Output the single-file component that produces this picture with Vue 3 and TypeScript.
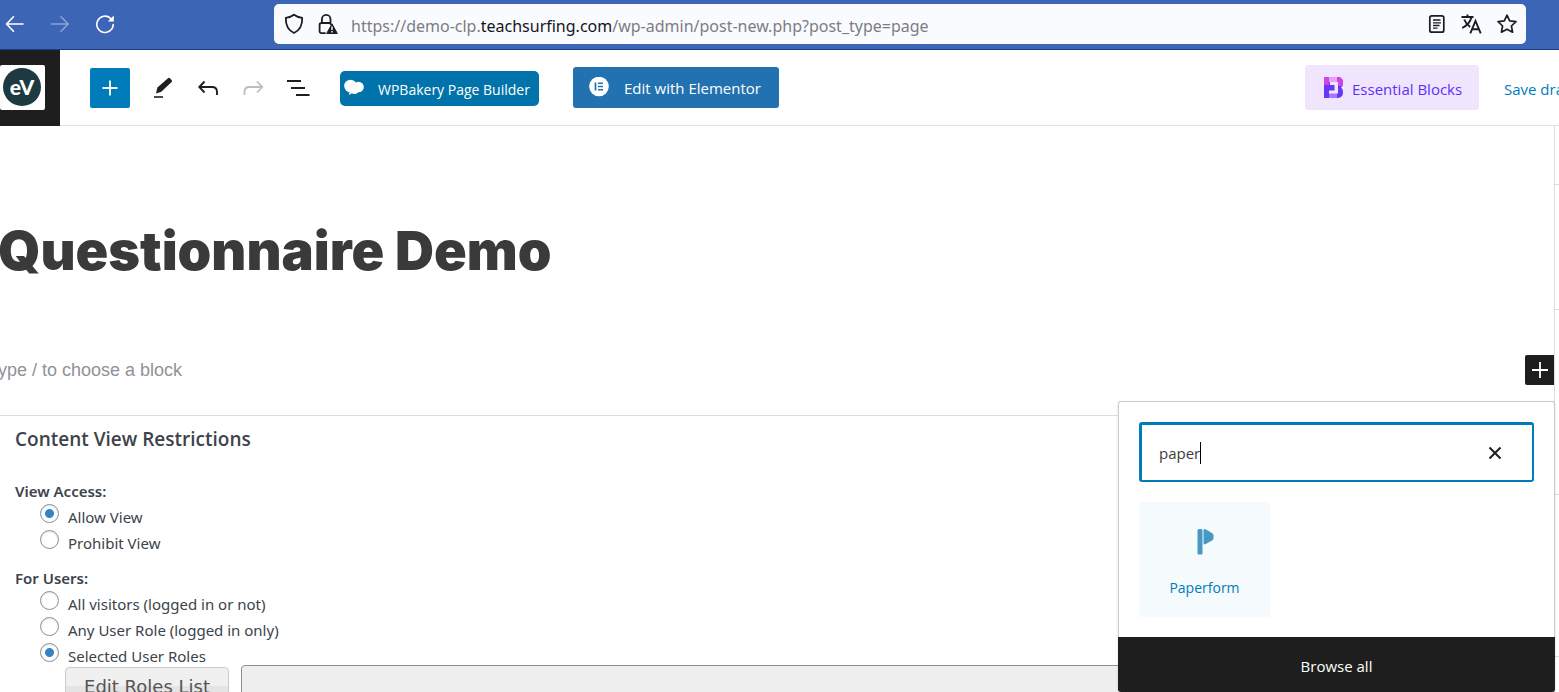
<script setup lang="ts">
import { ref } from 'vue'

interface Choice {
  value: string
  label: string
}

const accessChoices: Choice[] = [
  { value: 'allow', label: 'Allow View' },
  { value: 'prohibit', label: 'Prohibit View' },
]
const userChoices: Choice[] = [
  { value: 'all', label: 'All visitors (logged in or not)' },
  { value: 'any', label: 'Any User Role (logged in only)' },
  { value: 'selected', label: 'Selected User Roles' },
]

const access = ref('allow')
const users = ref('selected')
const search = ref('paper')
const roles = ref('')
</script>

<template>
  <div class="page">
    <nav class="browser" aria-label="Browser">
      <div class="nav-buttons">
        <button type="button" aria-label="Back">
          <svg width="20" height="20" viewBox="0 0 20 20" fill="none" stroke="#fff" stroke-width="1.6" stroke-linecap="round" stroke-linejoin="round"><path d="M18 10H2M8.500 2.800L1.500 10l7 7.200" /></svg>
        </button>
        <button type="button" aria-label="Forward" class="faded">
          <svg width="20" height="20" viewBox="0 0 20 20" fill="none" stroke="#fff" stroke-width="1.6" stroke-linecap="round" stroke-linejoin="round"><path d="M1.5 10H18M11 2.8l7.2 7.2L11 17.2" /></svg>
        </button>
        <button type="button" aria-label="Reload">
          <svg width="20" height="20" viewBox="0 0 20 20" fill="none" stroke="#fff" stroke-width="1.6" stroke-linecap="round"><path d="M18.2 10.5A8.2 8.2 0 1 1 15.6 4.3" /><path d="M18.8 1.6v6h-6z" fill="#fff" stroke="none" /></svg>
        </button>
      </div>
      <div class="address">
        <svg class="shield" width="20" height="22" viewBox="0 0 20 22" fill="none" stroke="#1c1c24" stroke-width="1.8" stroke-linejoin="round"><path d="M10 1.8C12 3.4 15 4.4 18.2 4.9 18.4 11.5 16.5 17 10 20 3.5 17 1.6 11.5 1.8 4.9 5 4.4 8 3.4 10 1.8z" /></svg>
        <svg class="lock" width="20" height="22" viewBox="0 0 20 22" fill="none" stroke="#1c1c24" stroke-width="1.8"><path d="M7 20.1H3.4a1.8 1.8 0 0 1-1.8-1.8v-6.5A1.8 1.8 0 0 1 3.4 10h8.5M3.9 10V6.2a4.3 4.3 0 0 1 8.6 0V11" stroke-linecap="round" /><path d="M14 10.8l5.3 9.7H8.7z" fill="#1c1c24" stroke="#1c1c24" stroke-width="1" stroke-linejoin="round" /><path d="M14 13.5v3.4M14 18v1.5" stroke="#fff" stroke-width="1.4" /></svg>
        <span class="url">https://demo-clp.<b>teachsurfing.com</b>/wp-admin/post-new.php?post_type=page</span>
        <span class="address-tools">
          <button type="button" aria-label="Reader view">
            <svg width="20" height="20" viewBox="0 0 20 20" fill="none" stroke="#1c1c24" stroke-width="1.7"><rect x="3.8" y="1.8" width="14" height="16.4" rx="2" /><path d="M7 6h7.500M7 8.800h8M7 11.500h6.500M7 14.200h4.500" stroke-width="1.300" /></svg>
          </button>
          <button type="button" aria-label="Translate">
            <svg width="22" height="20" viewBox="0 0 22 20" fill="none" stroke="#1c1c24" stroke-width="1.900"><path d="M1.500 3h12M7.500.5V3M11.500 3C10.500 7.500 7 11.500 2.200 14M4.200 5.500c1.300 3.200 3.300 5.600 6 7.500" /><path d="M10.300 19.300L15.500 7l5.200 12.300M12.200 15.300h6.600" /></svg>
          </button>
          <button type="button" aria-label="Bookmark">
            <svg width="22" height="20" viewBox="0 0 22 20" fill="none" stroke="#1c1c24" stroke-width="1.700" stroke-linejoin="round"><path d="M11 1.200l2.700 5.700 6.300.8-4.600 4.300 1.200 6.200L11 15.200l-5.600 3 1.200-6.200L2 7.700l6.300-.8z" /></svg>
          </button>
        </span>
      </div>
    </nav>

    <header class="topbar">
      <a href="#" class="site" aria-label="View pages">
        <span class="site-tile"><span class="site-logo">eV</span></span>
      </a>
      <div class="tools">
        <button type="button" class="inserter" aria-label="Toggle block inserter">
          <svg width="20" height="20" viewBox="0 0 20 20" stroke="#fff" stroke-width="1.8"><path d="M10 2.500v15M2.500 10h15" /></svg>
        </button>
        <button type="button" class="tool" aria-label="Tools">
          <svg width="24" height="24" viewBox="0 0 24 24"><path d="M5 17.500l1.400-6L17 2.300a1.400 1.400 0 0 1 1.900 0l1.700 1.800a1.400 1.400 0 0 1 0 1.900L10.300 15.800z" fill="#1e1e1e" /><path d="M3 21h9" stroke="#1e1e1e" stroke-width="1.600" /></svg>
        </button>
        <button type="button" class="tool" aria-label="Undo">
          <svg width="24" height="24" viewBox="0 0 24 24" fill="none" stroke="#1e1e1e" stroke-width="1.900"><path d="M8.500 5.500L3.300 11l5.200 5.500M3.300 11H16q5 0 5 5v3" /></svg>
        </button>
        <button type="button" class="tool" aria-label="Redo">
          <svg width="24" height="24" viewBox="0 0 24 24" fill="none" stroke="#bdbdbd" stroke-width="1.800"><path d="M16 5.500l5.200 5.500L16 16.500M21.200 11H8.500q-5 0-5 5v3" /></svg>
        </button>
        <button type="button" class="tool" aria-label="Document overview">
          <svg width="24" height="24" viewBox="0 0 24 24" stroke="#1e1e1e" stroke-width="1.800"><path d="M1 5h14M5 12h14M10 19h13.500" /></svg>
        </button>
      </div>
      <button type="button" class="wpbakery">
        <svg width="20" height="18" viewBox="0 0 20 18" fill="#fff"><circle cx="6.500" cy="7" r="6.300" /><circle cx="14.500" cy="8" r="5.300" /><circle cx="10.500" cy="11" r="4" /><path d="M9 13.500L4.800 16l1-4z" /></svg>
        <span>WPBakery Page Builder</span>
      </button>
      <button type="button" class="elementor">
        <svg width="22" height="22" viewBox="0 0 22 22"><circle cx="11" cy="9.500" r="9.800" fill="#fff" /><path d="M7.500 5.500v8" stroke="#2271b1" stroke-width="1.700" /><path d="M10 6.200h5M10 9.500h5M10 12.800h5" stroke="#2271b1" stroke-width="1.500" /></svg>
        <span>Edit with Elementor</span>
      </button>
      <button type="button" class="essential">
        <svg width="20" height="22" viewBox="0 0 20 22"><path d="M0 0h14a5 5 0 0 1 5 5v1.500q0 2.500-2 4 2 1.500 2 4V16a5 5 0 0 1-5 5H0z" fill="#6b35f5" /><path d="M0 0h14a5 5 0 0 1 5 5v1.500q0 1.500-.8 2.500L13 9V5H5v3H0z" fill="#cf45de" /><path d="M5 0h8v5H5z" fill="#ee9df7" /><path d="M5 16h8v5H5z" fill="#9f7bff" /><path d="M6 5h8v11.500H5v-3h5.500V8H6z" fill="#efe5fd" /></svg>
        <span>Essential Blocks</span>
      </button>
      <a href="#" class="save">Save draft</a>
    </header>

    <div class="workspace">
      <main class="editor">
        <h1 class="title">Questionnaire Demo</h1>
        <div class="block-row">
          <p class="prompt">Type / to choose a block</p>
          <button type="button" class="add-block" aria-label="Add block">
            <svg width="20" height="20" viewBox="0 0 20 20" stroke="#fff" stroke-width="1.800"><path d="M10 2v16M2 10h16" /></svg>
          </button>
          <section class="popover" aria-label="Block inserter">
            <div class="popover-body">
              <div class="search">
                <input v-model="search" type="text" aria-label="Search for blocks" />
                <span class="caret-line"><span class="typed">{{ search }}</span></span>
                <button type="button" aria-label="Reset search" @click="search = ''">
                  <svg width="14" height="14" viewBox="0 0 14 14" stroke="#1e1e1e" stroke-width="2"><path d="M1.500 1.500l11 11M12.500 1.500l-11 11" /></svg>
                </button>
              </div>
              <button type="button" class="block-card">
                <svg width="30" height="30" viewBox="0 0 30 30" fill="#4799c2"><rect x="7.500" y="3" width="5" height="25.500" rx="1.500" /><path d="M13.500 4.500q0-2 2-1.200l6.500 3.800q1.500 1 1.500 2.500v2.500q0 1.500-1.500 2.500l-6.200 3.500q-2.300 1-2.300-1z" /></svg>
                <span>Paperform</span>
              </button>
            </div>
            <button type="button" class="browse">Browse all</button>
          </section>
        </div>

        <section class="restrictions">
          <h2>Content View Restrictions</h2>
          <fieldset>
            <legend>View Access:</legend>
            <label v-for="c in accessChoices" :key="c.value">
              <input v-model="access" type="radio" name="access" :value="c.value" />
              <span>{{ c.label }}</span>
            </label>
          </fieldset>
          <fieldset>
            <legend>For Users:</legend>
            <label v-for="c in userChoices" :key="c.value">
              <input v-model="users" type="radio" name="users" :value="c.value" />
              <span>{{ c.label }}</span>
            </label>
          </fieldset>
          <div class="roles">
            <button type="button">Edit Roles List</button>
            <input v-model="roles" type="text" readonly aria-label="Selected roles" />
          </div>
        </section>
      </main>
      <aside class="sidebar" aria-label="Settings">
        <div class="panel head"></div>
        <div class="panel summary"></div>
        <div class="panel status"></div>
        <div class="panel template"></div>
      </aside>
    </div>
  </div>
</template>

<style>
body {
  margin: 0;
  overflow: hidden;
}
</style>

<style scoped>
* {
  box-sizing: border-box;
}

.page {
  display: flex;
  flex-direction: column;
  height: 100vh;
  overflow: hidden;
  background: #fff;
  color: #3c434a;
  font-family: 'Open Sans', 'Noto Sans', sans-serif;
  font-size: 15px;
}

button {
  margin: 0;
  padding: 0;
  border: 0;
  background: none;
  color: inherit;
  font: inherit;
  cursor: pointer;
}

svg {
  display: block;
  flex: none;
}

/* Browser chrome */
.browser {
  display: flex;
  flex: none;
  align-items: center;
  height: 50px;
  padding: 0 33px 2px 5px;
  border-bottom: 1px solid #1c3a7c;
  background: #3d65b6;
}

.nav-buttons {
  display: flex;
  flex: none;
  gap: 25px;
  width: 269px;
}

.faded {
  opacity: 0.4;
}

.address {
  display: flex;
  flex: 1;
  align-items: center;
  height: 40px;
  padding: 0 8px 0 10px;
  border-radius: 5px;
  background: #f9fbff;
}

.lock {
  margin-left: 14px;
}

.url {
  flex: 1;
  margin-left: 13px;
  padding-top: 4px;
  color: #7c7d83;
  font-family: 'Noto Sans', sans-serif;
  font-size: 16px;
  line-height: 22px;
  white-space: nowrap;
}

.url b {
  color: #15141a;
  font-weight: 400;
}

.address-tools {
  display: flex;
  align-items: center;
  gap: 14px;
}

/* Editor toolbar */
.topbar {
  display: flex;
  flex: none;
  align-items: center;
  height: 76px;
  border-bottom: 1px solid #e0e0e0;
}

.site {
  display: flex;
  flex: none;
  align-items: center;
  align-self: flex-start;
  width: 60px;
  height: 76px;
  padding-bottom: 2px;
  background: #1e1e1e;
  text-decoration: none;
}

.site-tile {
  display: flex;
  align-items: center;
  justify-content: center;
  width: 45px;
  height: 45px;
  padding-right: 1px;
  border-radius: 2px;
  background: #fff;
}

.site-logo {
  width: 38px;
  height: 38px;
  border-radius: 50%;
  background: #1d3a40;
  color: #fff;
  font-family: Lato, sans-serif;
  font-size: 21px;
  font-weight: 900;
  line-height: 37px;
  text-align: center;
}

.tools {
  display: flex;
  flex: none;
  align-items: center;
  gap: 21px;
  margin-left: 30px;
}

.inserter {
  display: flex;
  align-items: center;
  justify-content: center;
  width: 40px;
  height: 40px;
  border-radius: 2px;
  background: #007cba;
}

.wpbakery,
.elementor,
.essential {
  display: flex;
  flex: none;
  align-items: center;
  white-space: nowrap;
}

.wpbakery {
  width: 199px;
  height: 35px;
  margin-top: 1px;
  margin-left: 30px;
  padding-left: 4px;
  gap: 14px;
  border-radius: 5px;
  background: #0073aa;
  color: #fff;
  font-size: 14px;
}

.wpbakery span {
  padding-top: 3px;
}

.elementor {
  width: 206px;
  height: 41px;
  margin-left: 34px;
  padding-left: 15px;
  gap: 14px;
  border-radius: 3px;
  background: #2271b1;
  color: #fff;
}

.essential {
  width: 174px;
  height: 45px;
  margin-left: auto;
  padding-left: 19px;
  gap: 8px;
  border-radius: 3px;
  background: #efe5fd;
  color: #5e2eff;
}

.essential span,
.save {
  padding-top: 2px;
}

.save {
  flex: none;
  width: 55px;
  margin-left: 25px;
  color: #007cba;
  text-decoration: none;
  white-space: nowrap;
}

/* Canvas */
.workspace {
  display: flex;
  flex: 1;
  min-height: 0;
}

.editor {
  flex: 1;
  min-width: 0;
}

.title {
  margin: 0 0 0 -2px;
  padding: 90px 0 69px;
  color: #3a3a3a;
  font-family: Inter, 'Liberation Sans', sans-serif;
  font-size: 54px;
  font-weight: 900;
  line-height: 70px;
  white-space: nowrap;
}

.block-row {
  position: relative;
  display: flex;
  align-items: center;
  justify-content: space-between;
  height: 30px;
}

.prompt {
  margin: 0 0 0 -12px;
  color: #8f9297;
  font-family: 'Liberation Sans', Arial, sans-serif;
  font-size: 18px;
}

.add-block {
  display: flex;
  align-items: center;
  justify-content: center;
  width: 29px;
  height: 30px;
  border-radius: 2px 0 0 2px;
  background: #1e1e1e;
}

/* Inserter popover */
.popover {
  position: absolute;
  z-index: 2;
  top: 46px;
  right: -1px;
  width: 437px;
  border: 1px solid #ccc;
  border-bottom: 0;
  border-radius: 3px;
  background: #fff;
  box-shadow: 0 1px 3px rgba(0, 0, 0, 0.12);
}

.popover-body {
  padding: 20px;
}

.search {
  position: relative;
  display: flex;
  align-items: center;
  height: 60px;
  border: 2px solid #007cba;
  border-top-width: 3px;
  border-left-width: 3px;
  border-radius: 3px;
}

.search input {
  flex: 1;
  min-width: 0;
  height: 100%;
  padding: 1px 0 0 17px;
  border: 0;
  outline: 0;
  background: none;
  color: #3c3c3c;
  font: inherit;
}

.search button {
  margin-right: 30px;
}

.caret-line {
  position: absolute;
  left: 17px;
  height: 22px;
  border-right: 1px solid #000;
  pointer-events: none;
}

.typed {
  visibility: hidden;
}

.block-card {
  display: flex;
  flex-direction: column;
  align-items: center;
  width: 131px;
  height: 115px;
  margin-top: 20px;
  padding-top: 24px;
  gap: 22px;
  border-radius: 2px;
  background: #f5fafd;
  color: #007cba;
  font-size: 14px;
}

.browse {
  display: block;
  width: calc(100% + 2px);
  height: 55px;
  margin: 0 -1px;
  padding-top: 2px;
  border-radius: 0 0 3px 3px;
  background: #1e1e1e;
  color: #fff;
}

/* Restrictions box */
.restrictions {
  margin-top: 30px;
  padding: 10px 0 0 15px;
  border-top: 1px solid #ddd;
  font-family: 'Noto Sans', sans-serif;
}

.restrictions h2 {
  margin: 0 0 27px;
  font-family: 'Open Sans', sans-serif;
  font-size: 19px;
  font-weight: 600;
  line-height: 26px;
}

fieldset {
  margin: 0 0 10px;
  padding: 0;
  border: 0;
}

legend {
  padding: 0;
  font-weight: 600;
  line-height: 25px;
}

fieldset label {
  display: flex;
  gap: 9px;
  width: max-content;
  margin-left: 25px;
  line-height: 26px;
}

fieldset input {
  flex: none;
  width: 19px;
  height: 19px;
  margin: 0;
  border: 1px solid #8c8f94;
  border-radius: 50%;
  background: #fff;
  box-shadow: inset 0 1px 2px rgba(0, 0, 0, 0.12);
  appearance: none;
}

fieldset input:checked {
  background: radial-gradient(circle, #3582c4 4px, #fff 5px);
}

.roles {
  display: flex;
  align-items: flex-start;
  gap: 12px;
  margin: -14px 0 0 50px;
}

.roles button {
  width: 164px;
  height: 38px;
  margin-top: 2px;
  border: 1px solid #ccc;
  border-radius: 4px;
  background: linear-gradient(#f0f0f0 0 50%, #e4e4e4 50%);
  color: #555;
  font-family: 'DejaVu Sans', Verdana, sans-serif;
  font-size: 18px;
}

.roles input {
  flex: 1;
  height: 60px;
  border: 1px solid #8c8f94;
  border-radius: 4px;
  background: #eee;
}

/* Settings sidebar edge */
.sidebar {
  flex: none;
  width: 5px;
  border-left: 1px solid #ddd;
}

.panel {
  border-bottom: 1px solid #ddd;
}

.head {
  height: 59px;
}

.summary {
  height: 125px;
}

.status {
  height: 185px;
}

.template {
  height: 162px;
}
</style>
